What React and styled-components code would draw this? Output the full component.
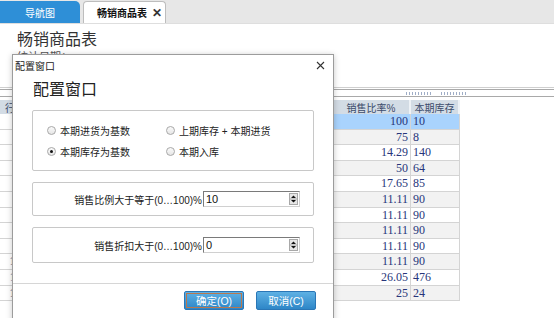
import styled, { createGlobalStyle, css } from "styled-components";

const GlobalStyle = createGlobalStyle`
  html, body { margin: 0; padding: 0; background: #fff; }
  body { font-family: "Liberation Sans", "Noto Sans CJK SC", sans-serif; }
`;

const Page = styled.div`
  position: relative;
  width: 554px;
  height: 318px;
  overflow: hidden;
  background: #fff;
`;

const TabBar = styled.div`
  display: flex;
  align-items: flex-end;
  gap: 3px;
  height: 24px;
  box-sizing: border-box;
  background: #e7e7e7;
  border-bottom: 1px solid #dedede;
`;

const Tab = styled.div`
  display: flex;
  align-items: center;
  gap: 5px;
  width: ${(p) => p.$width}px;
  height: 22px;
  box-sizing: border-box;
  font-size: 10px;
  ${(p) =>
    p.$active
      ? css`
          padding-left: 13px;
          background: #fff;
          border: 1px solid #bdbdbd;
          border-bottom: none;
          border-radius: 4px 4px 0 0;
          color: #111;
          font-weight: bold;
        `
      : css`
          justify-content: center;
          background: #2e8fd7;
          border-radius: 0 5px 0 0;
          color: #fff;
        `}
`;

const TabClose = styled.span`
  font-size: 12px;
  color: #333;
`;

const Title = styled.div`
  padding: 5px 0 0 17px;
  font-size: 16px;
  line-height: 22px;
  color: #333;
`;

const FilterRow = styled.div`
  height: 36px;
  padding-left: 17px;
  font-size: 11px;
  line-height: 12px;
  color: #555;
`;

const Splitter = styled.div`
  border-top: 1px solid #cfcfcf;
  padding-top: 1px;
`;

const SplitterBar = styled.div`
  display: flex;
  align-items: center;
  gap: 9px;
  height: 6px;
  padding-left: 406px;
  border-top: 1px solid #a9a9a9;
  border-bottom: 1px solid #a9a9a9;
`;

const Grip = styled.span`
  width: 26px;
  height: 3px;
  background: repeating-linear-gradient(90deg, #9fadc6 0 1px, transparent 1px 3px);
`;

const cols = "32px 148px 153px 78px 49px";

const Grid = styled.div`
  margin-top: 3px;
`;

const HeaderRow = styled.div`
  display: grid;
  grid-template-columns: ${cols};
  height: 14px;
`;

const HeadCell = styled.div`
  display: flex;
  align-items: center;
  justify-content: center;
  background: #d3dce5;
  border-right: 2px solid #eef2f6;
  font-size: 10px;
  color: #3b4b6b;
`;

const Row = styled.div`
  display: grid;
  grid-template-columns: ${cols};
  height: 15.6px;
`;

const Cell = styled.div`
  box-sizing: border-box;
  padding: 0 2px;
  border-right: 1px solid #d4d4d4;
  border-bottom: 1px solid #d4d4d4;
  background: ${(p) => p.$bg};
  font-family: "Liberation Serif", serif;
  font-size: 12px;
  line-height: 15px;
  color: #27357a;
  text-align: ${(p) => p.$align || "left"};
  white-space: nowrap;
  overflow: hidden;
`;

const Dialog = styled.div`
  position: absolute;
  left: 12px;
  top: 54px;
  width: 322px;
  height: 290px;
  box-sizing: border-box;
  display: flex;
  flex-direction: column;
  background: #fff;
  border: 1px solid #9c9c9c;
  box-shadow: 0 1px 6px rgba(0, 0, 0, 0.22);
`;

const DialogHead = styled.div`
  display: flex;
  align-items: center;
  justify-content: space-between;
  height: 20px;
  padding: 0 8px 0 2px;
  font-size: 10px;
  color: #222;
`;

const Heading = styled.div`
  margin: 5px 0 0 20px;
  font-size: 16px;
  line-height: 20px;
  color: #222;
`;

const Group = styled.div`
  box-sizing: border-box;
  height: ${(p) => p.$h}px;
  margin: ${(p) => p.$top}px 19px 0 19px;
  border: 1px solid #c8c8c8;
  border-radius: 2px;
`;

const RadioGrid = styled.div`
  display: grid;
  grid-template-columns: 119px auto;
  grid-auto-rows: 21px;
  padding: 9px 0 0 14px;
`;

const Option = styled.label`
  display: flex;
  align-items: center;
  gap: 4px;
  font-size: 10px;
  color: #222;
`;

const RadioDot = styled.span`
  position: relative;
  width: 9px;
  height: 9px;
  box-sizing: border-box;
  border-radius: 50%;
  border: 1px solid #a8a8a8;
  background: linear-gradient(#fafafa, #e6e6e6);
  ${(p) =>
    p.$checked &&
    css`
      &::after {
        content: "";
        position: absolute;
        left: 2px;
        top: 2px;
        width: 3px;
        height: 3px;
        border-radius: 50%;
        background: #111;
      }
    `}
`;

const FieldRow = styled.div`
  display: flex;
  align-items: center;
  justify-content: flex-end;
  height: 100%;
  padding-right: 13px;
  font-size: 10px;
  color: #222;
`;

const InputBox = styled.div`
  display: flex;
  align-items: center;
  justify-content: space-between;
  width: 97px;
  height: 16px;
  box-sizing: border-box;
  margin-left: 1px;
  padding: 0 1px 0 2px;
  border: 1px solid;
  border-color: #7a7a7a #d0d0d0 #d0d0d0 #7a7a7a;
  font-size: 11px;
  color: #111;
`;

const Spinner = styled.span`
  display: flex;
  width: 9px;
  height: 12px;
  box-sizing: border-box;
  border: 1px solid #a8a8a8;
  background: #e6e6e6;
`;

const Separator = styled.div`
  margin-top: 20px;
  border-top: 1px solid #d6d6d6;
`;

const Footer = styled.div`
  display: flex;
  justify-content: flex-end;
  gap: 12px;
  padding: 7px 17px 0 0;
`;

const Button = styled.button`
  width: 60px;
  height: 19px;
  box-sizing: border-box;
  padding: 0;
  border: 1px solid #2a76b6;
  border-radius: 2px;
  background: linear-gradient(#5eb1e4, #2e86c7);
  color: #fff;
  font-family: "Liberation Sans", "Noto Sans CJK SC", sans-serif;
  font-size: 10.5px;
  ${(p) =>
    p.$focused &&
    css`
      outline: 1px solid #b8784f;
      outline-offset: -3px;
    `}
`;

const rows = [
  ["100", "10"],
  ["75", "8"],
  ["14.29", "140"],
  ["50", "64"],
  ["17.65", "85"],
  ["11.11", "90"],
  ["11.11", "90"],
  ["11.11", "90"],
  ["11.11", "90"],
  ["11.11", "90"],
  ["26.05", "476"],
  ["25", "24"],
];

const rowBg = (i) => (i === 0 ? "#a9d3fd" : i % 2 ? "#f2f2f2" : "#fff");

const Close = () => (
  <svg width="9" height="9" viewBox="0 0 9 9">
    <path d="M1 1L8 8M8 1L1 8" stroke="#333" strokeWidth="1.1" />
  </svg>
);

const SpinArrows = () => (
  <Spinner>
    <svg width="7" height="10" viewBox="0 0 7 10">
      <path d="M1 4L3.5 1.5L6 4Z M1 6L3.5 8.5L6 6Z" fill="#111" />
      <path d="M0 5H7" stroke="#999" strokeWidth="0.8" />
    </svg>
  </Spinner>
);

const Field = ({ label, value }) => (
  <FieldRow>
    <span>{label}</span>
    <InputBox>
      <span>{value}</span>
      <SpinArrows />
    </InputBox>
  </FieldRow>
);

export default function App() {
  return (
    <Page>
      <GlobalStyle />
      <TabBar>
        <Tab $width={80}>导航图</Tab>
        <Tab $width={83} $active>
          畅销商品表<TabClose>✕</TabClose>
        </Tab>
      </TabBar>
      <Title>畅销商品表</Title>
      <FilterRow>统计日期：</FilterRow>
      <Splitter>
        <SplitterBar>
          <Grip />
          <Grip />
        </SplitterBar>
      </Splitter>
      <Grid>
        <HeaderRow>
          <HeadCell>行号</HeadCell>
          <HeadCell>商品名称</HeadCell>
          <HeadCell>销售数量</HeadCell>
          <HeadCell>销售比率%</HeadCell>
          <HeadCell>本期库存</HeadCell>
        </HeaderRow>
        {rows.map(([rate, stock], i) => (
          <Row key={i}>
            <Cell $bg="#fff" $align="center">{i + 1}</Cell>
            <Cell $bg={rowBg(i)} />
            <Cell $bg={rowBg(i)} />
            <Cell $bg={rowBg(i)} $align="right">{rate}</Cell>
            <Cell $bg={rowBg(i)}>{stock}</Cell>
          </Row>
        ))}
      </Grid>

      <Dialog>
        <DialogHead>
          <span>配置窗口</span>
          <Close />
        </DialogHead>
        <Heading>配置窗口</Heading>
        <Group $top={10} $h={61}>
          <RadioGrid>
            <Option><RadioDot />本期进货为基数</Option>
            <Option><RadioDot />上期库存 + 本期进货</Option>
            <Option><RadioDot $checked />本期库存为基数</Option>
            <Option><RadioDot />本期入库</Option>
          </RadioGrid>
        </Group>
        <Group $top={11} $h={34}>
          <Field label="销售比例大于等于(0…100)%" value="10" />
        </Group>
        <Group $top={11} $h={36}>
          <Field label="销售折扣大于(0…100)%" value="0" />
        </Group>
        <Separator />
        <Footer>
          <Button $focused>确定(O)</Button>
          <Button>取消(C)</Button>
        </Footer>
      </Dialog>
    </Page>
  );
}
